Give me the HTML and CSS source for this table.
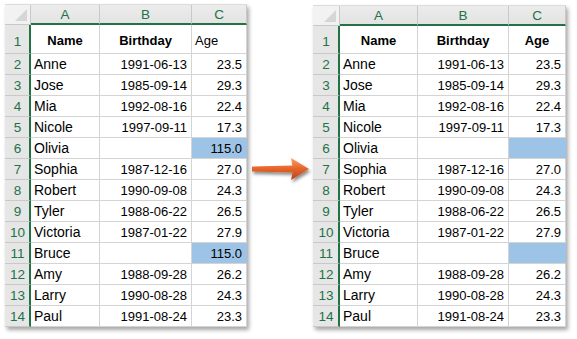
FILE: index.html
```html
<!DOCTYPE html>
<html>
<head>
<meta charset="utf-8">
<link rel="stylesheet" href="styles.css">
</head>
<body>
<div class="page">
  <div class="sheet sheet-left">
    <div class="corner"><span class="tri"></span></div>
    <div class="ch">A</div><div class="ch">B</div><div class="ch">C</div>

    <div class="rh rh1">1</div><div class="c ctr b">Name</div><div class="c ctr b">Birthday</div><div class="c hdr">Age</div>
    <div class="rh">2</div><div class="c">Anne</div><div class="c num">1991-06-13</div><div class="c num">23.5</div>
    <div class="rh">3</div><div class="c">Jose</div><div class="c num">1985-09-14</div><div class="c num">29.3</div>
    <div class="rh">4</div><div class="c">Mia</div><div class="c num">1992-08-16</div><div class="c num">22.4</div>
    <div class="rh">5</div><div class="c">Nicole</div><div class="c num">1997-09-11</div><div class="c num">17.3</div>
    <div class="rh">6</div><div class="c">Olivia</div><div class="c num"></div><div class="c num sel">115.0</div>
    <div class="rh">7</div><div class="c">Sophia</div><div class="c num">1987-12-16</div><div class="c num">27.0</div>
    <div class="rh">8</div><div class="c">Robert</div><div class="c num">1990-09-08</div><div class="c num">24.3</div>
    <div class="rh">9</div><div class="c">Tyler</div><div class="c num">1988-06-22</div><div class="c num">26.5</div>
    <div class="rh">10</div><div class="c">Victoria</div><div class="c num">1987-01-22</div><div class="c num">27.9</div>
    <div class="rh">11</div><div class="c">Bruce</div><div class="c num"></div><div class="c num sel">115.0</div>
    <div class="rh">12</div><div class="c">Amy</div><div class="c num">1988-09-28</div><div class="c num">26.2</div>
    <div class="rh">13</div><div class="c">Larry</div><div class="c num">1990-08-28</div><div class="c num">24.3</div>
    <div class="rh">14</div><div class="c">Paul</div><div class="c num">1991-08-24</div><div class="c num">23.3</div>
  </div>

  <div class="arrow-wrap">
    <svg class="arrow" width="66" height="40" viewBox="0 0 66 40">
      <defs>
        <linearGradient id="ag" x1="0" y1="0" x2="0" y2="1">
          <stop offset="0" stop-color="#f6a06a"/>
          <stop offset="0.45" stop-color="#e8672c"/>
          <stop offset="1" stop-color="#b9421a"/>
        </linearGradient>
        <filter id="sh" x="-20%" y="-30%" width="150%" height="180%">
          <feDropShadow dx="1.5" dy="2.5" stdDeviation="1.6" flood-color="#000" flood-opacity="0.45"/>
        </filter>
      </defs>
      <path d="M5 17.6 L45.5 16.6 L44 9 L62 20 L44 31 L45.5 23.4 L5 22.4 Z" fill="url(#ag)" filter="url(#sh)"/>
    </svg>
  </div>

  <div class="sheet sheet-right">
    <div class="corner"><span class="tri"></span></div>
    <div class="ch">A</div><div class="ch">B</div><div class="ch">C</div>

    <div class="rh rh1">1</div><div class="c ctr b">Name</div><div class="c ctr b">Birthday</div><div class="c ctr b">Age</div>
    <div class="rh">2</div><div class="c">Anne</div><div class="c num">1991-06-13</div><div class="c num">23.5</div>
    <div class="rh">3</div><div class="c">Jose</div><div class="c num">1985-09-14</div><div class="c num">29.3</div>
    <div class="rh">4</div><div class="c">Mia</div><div class="c num">1992-08-16</div><div class="c num">22.4</div>
    <div class="rh">5</div><div class="c">Nicole</div><div class="c num">1997-09-11</div><div class="c num">17.3</div>
    <div class="rh">6</div><div class="c">Olivia</div><div class="c num"></div><div class="c num sel"></div>
    <div class="rh">7</div><div class="c">Sophia</div><div class="c num">1987-12-16</div><div class="c num">27.0</div>
    <div class="rh">8</div><div class="c">Robert</div><div class="c num">1990-09-08</div><div class="c num">24.3</div>
    <div class="rh">9</div><div class="c">Tyler</div><div class="c num">1988-06-22</div><div class="c num">26.5</div>
    <div class="rh">10</div><div class="c">Victoria</div><div class="c num">1987-01-22</div><div class="c num">27.9</div>
    <div class="rh">11</div><div class="c">Bruce</div><div class="c num"></div><div class="c num sel"></div>
    <div class="rh">12</div><div class="c">Amy</div><div class="c num">1988-09-28</div><div class="c num">26.2</div>
    <div class="rh">13</div><div class="c">Larry</div><div class="c num">1990-08-28</div><div class="c num">24.3</div>
    <div class="rh">14</div><div class="c">Paul</div><div class="c num">1991-08-24</div><div class="c num">23.3</div>
  </div>
</div>
</body>
</html>
```

FILE: styles.css
```css
* { box-sizing: border-box; }

html, body {
  margin: 0;
  padding: 0;
  background: #ffffff;
}

body {
  font-family: "Liberation Sans", Arial, sans-serif;
  color: #000;
}

.page {
  display: flex;
  align-items: flex-start;
  padding: 4px 0 0 5px;
  width: 577px;
  height: 339px;
}

.sheet {
  display: grid;
  background: #fff;
  box-shadow: 2px 3px 4px rgba(0, 0, 0, 0.35);
  border-top: 1px solid #dcdcdc;
}

.sheet-left {
  grid-template-columns: 26px 69px 92px 55px;
  grid-template-rows: 20px 29px repeat(13, 21px);
}

.sheet-right {
  margin-top: 1px;
  grid-template-columns: 27px 78px 91px 57px;
  grid-template-rows: 20px 28px repeat(13, 21px);
}

.corner {
  position: relative;
  background: #f2f2f2;
  border-right: 1px solid #c9c9c9;
  border-bottom: 1px solid #c9c9c9;
}

.tri {
  position: absolute;
  right: 3px;
  bottom: 3px;
  width: 0;
  height: 0;
  border-left: 12px solid transparent;
  border-bottom: 12px solid #d6d6d6;
}

.ch {
  background: linear-gradient(#ececec, #e3e3e3);
  border-right: 1px solid #c9c9c9;
  border-bottom: 2px solid #217346;
  color: #217346;
  font-size: 13.5px;
  display: flex;
  align-items: center;
  justify-content: center;
  padding-top: 1px;
}

.rh {
  background: #e6e6e6;
  border-right: 2px solid #217346;
  border-bottom: 1px solid #c9c9c9;
  color: #217346;
  font-size: 13.5px;
  display: flex;
  align-items: center;
  justify-content: center;
  padding-left: 1px;
}

.rh1 {
  align-items: flex-end;
  padding-bottom: 4px;
}

.c {
  border-right: 1px solid #d4d4d4;
  border-bottom: 1px solid #d4d4d4;
  font-size: 14px;
  display: flex;
  align-items: center;
  padding: 0 3px;
  white-space: nowrap;
  overflow: hidden;
}

.c.ctr {
  justify-content: center;
  padding-top: 2px;
}

.c.b {
  font-weight: bold;
  font-size: 13px;
}

.c.hdr {
  font-size: 13px;
  padding-top: 2px;
}

.c.num {
  justify-content: flex-end;
  font-size: 13px;
  padding-right: 4px;
}

.c.sel {
  background: #9dc3e6;
  border-right-color: #9dc3e6;
}

.arrow-wrap {
  width: 66px;
  flex: none;
  padding-top: 145px;
  display: flex;
}

.arrow {
  display: block;
}
```
